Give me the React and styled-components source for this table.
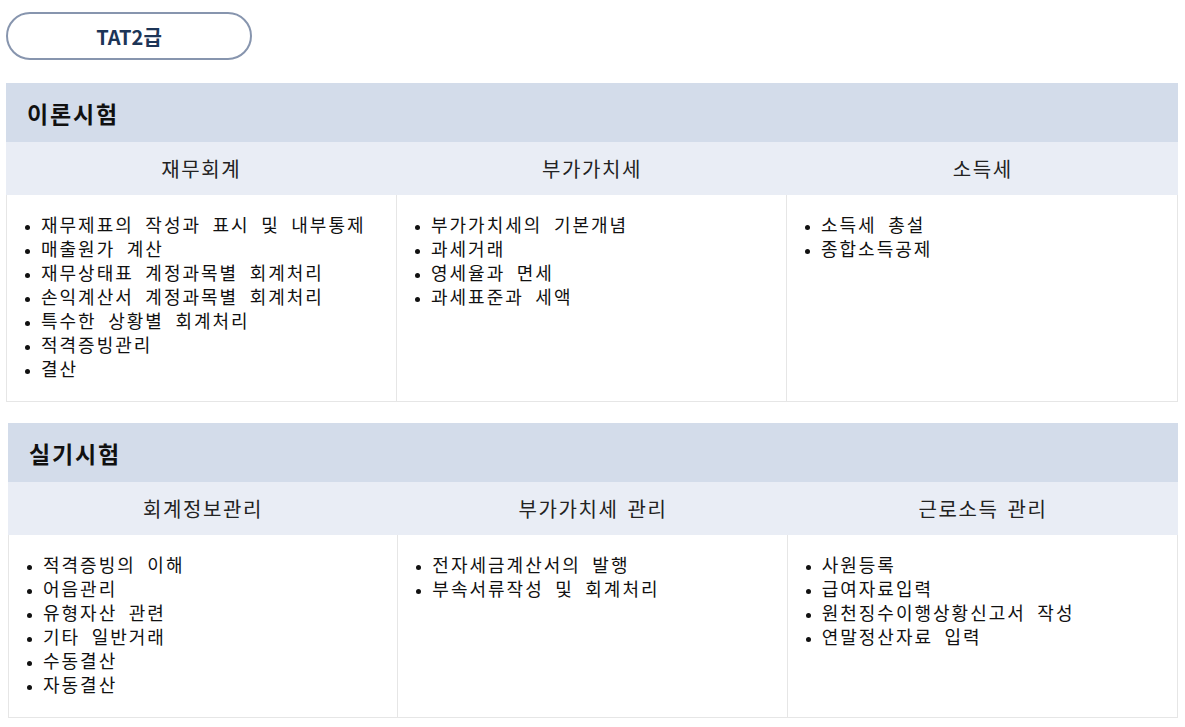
import React from "react";
import styled, { createGlobalStyle } from "styled-components";

const GlobalStyle = createGlobalStyle`
  body {
    margin: 0;
    background: #ffffff;
    font-family: "Noto Sans CJK KR", "Noto Sans", sans-serif;
    color: #111111;
  }
`;

const Page = styled.div`
  padding: 12px 0 0 6px;
  width: 1172px;
`;

const LevelPill = styled.div`
  width: 242px;
  height: 44px;
  border: 2px solid #8795ae;
  border-radius: 24px;
  display: flex;
  align-items: center;
  justify-content: center;
  font-size: 20px;
  font-weight: 700;
  color: #1d3557;
`;

const Section = styled.section`
  margin-top: ${(p) => p.$top}px;
  margin-left: ${(p) => p.$shift || 0}px;
`;

const SectionHead = styled.div`
  height: 59px;
  background: #d3dcea;
  display: flex;
  align-items: center;
  padding-left: 21px;
  font-size: 23px;
  font-weight: 700;
  letter-spacing: 1.8px;
  color: #111111;
`;

const ColumnRow = styled.div`
  display: grid;
  grid-template-columns: repeat(3, 1fr);
`;

const ColumnTitle = styled.div`
  height: 53px;
  background: #e9edf5;
  display: flex;
  align-items: center;
  justify-content: center;
  font-size: 20px;
  letter-spacing: 1.6px;
  word-spacing: 3px;
  color: #222222;
`;

const Body = styled(ColumnRow)`
  border: 1px solid #e6e6e6;
  border-top: none;
`;

const Cell = styled.div`
  border-right: 1px solid #e6e6e6;
  padding: 17px 0 21px;
  &:last-child {
    border-right: none;
  }
`;

const List = styled.ul`
  margin: 0;
  padding-left: 34px;
  list-style: disc;
  font-size: 18px;
  line-height: 24px;
  letter-spacing: 2px;
  word-spacing: 5.5px;
  li::marker {
    font-size: 12px;
  }
`;

const exams = [
  {
    title: "이론시험",
    top: 23,
    shift: 0,
    columns: [
      {
        name: "재무회계",
        items: [
          "재무제표의 작성과 표시 및 내부통제",
          "매출원가 계산",
          "재무상태표 계정과목별 회계처리",
          "손익계산서 계정과목별 회계처리",
          "특수한 상황별 회계처리",
          "적격증빙관리",
          "결산",
        ],
      },
      {
        name: "부가가치세",
        items: ["부가가치세의 기본개념", "과세거래", "영세율과 면세", "과세표준과 세액"],
      },
      { name: "소득세", items: ["소득세 총설", "종합소득공제"] },
    ],
  },
  {
    title: "실기시험",
    top: 21,
    shift: 2,
    columns: [
      {
        name: "회계정보관리",
        items: ["적격증빙의 이해", "어음관리", "유형자산 관련", "기타 일반거래", "수동결산", "자동결산"],
      },
      { name: "부가가치세 관리", items: ["전자세금계산서의 발행", "부속서류작성 및 회계처리"] },
      {
        name: "근로소득 관리",
        items: ["사원등록", "급여자료입력", "원천징수이행상황신고서 작성", "연말정산자료 입력"],
      },
    ],
  },
];

const App = () => {
  return (
    <>
      <GlobalStyle />
      <Page>
        <LevelPill>TAT2급</LevelPill>
        {exams.map((exam) => (
          <Section key={exam.title} $top={exam.top} $shift={exam.shift}>
            <SectionHead>{exam.title}</SectionHead>
            <ColumnRow>
              {exam.columns.map((col) => (
                <ColumnTitle key={col.name}>{col.name}</ColumnTitle>
              ))}
            </ColumnRow>
            <Body>
              {exam.columns.map((col) => (
                <Cell key={col.name}>
                  <List>
                    {col.items.map((item) => (
                      <li key={item}>{item}</li>
                    ))}
                  </List>
                </Cell>
              ))}
            </Body>
          </Section>
        ))}
      </Page>
    </>
  );
};

export default App;
